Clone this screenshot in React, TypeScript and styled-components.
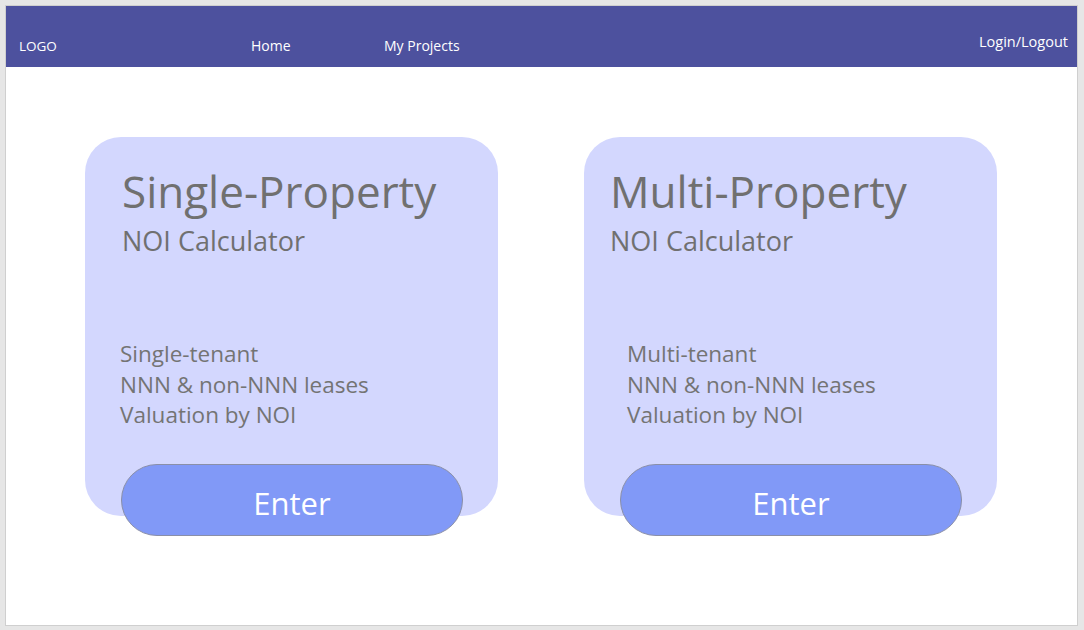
import React from 'react'
import styled, { createGlobalStyle } from 'styled-components'

const Global = createGlobalStyle`
  html, body {
    margin: 0;
    padding: 0;
    background: #e6e6e6;
    font-family: "Open Sans", "Noto Sans", sans-serif;
  }
`

const Frame = styled.div`
  box-sizing: border-box;
  margin: 5px 0 0 5px;
  width: 1073px;
  height: 621px;
  background: #ffffff;
  border: 1px solid #cfcfcf;
  display: flex;
  flex-direction: column;
`

const Header = styled.header`
  box-sizing: border-box;
  height: 61px;
  background: #4d519e;
  color: #ffffff;
  display: flex;
  align-items: flex-end;
  padding: 0 9px 12px 13px;
  font-size: 14px;
`

const Logo = styled.div`
  width: 232px;
  font-size: 13.5px;
`

const NavLink = styled.a<{ $w?: number }>`
  color: #ffffff;
  text-decoration: none;
  width: ${(p) => (p.$w ? `${p.$w}px` : 'auto')};
`

const Auth = styled.a`
  margin-left: auto;
  color: #ffffff;
  text-decoration: none;
  font-size: 14.5px;
  position: relative;
  top: -4px;
`

const Main = styled.main`
  display: flex;
  gap: 86px;
  padding: 70px 79px 0 79px;
`

const Card = styled.section`
  box-sizing: border-box;
  width: 413px;
  height: 379px;
  background: #d3d7fe;
  border-radius: 36px;
  display: flex;
  flex-direction: column;
  padding: 28px 35px 0 36px;
`

const Title = styled.h2<{ $indent: number }>`
  margin: 0 0 0 ${(p) => p.$indent}px;
  font-weight: 400;
  font-size: 44px;
  line-height: 52px;
  color: #707070;
`

const Subtitle = styled.div<{ $indent: number }>`
  margin: 6px 0 0 ${(p) => p.$indent}px;
  font-size: 27px;
  line-height: 36px;
  color: #707070;
`

const Features = styled.ul<{ $indent: number }>`
  list-style: none;
  margin: 80px 0 0 ${(p) => p.$indent}px;
  padding: 0;
  font-size: 22.5px;
  line-height: 30.5px;
  color: #747474;
`

const EnterButton = styled.button`
  box-sizing: border-box;
  margin-top: auto;
  margin-bottom: -20px;
  width: 342px;
  height: 72px;
  padding: 5px 0 0;
  border-radius: 36px;
  border: 1px solid #8a8fa8;
  background: #8199f7;
  color: #ffffff;
  font-family: inherit;
  font-size: 31px;
  cursor: pointer;
`

type CalcProps = {
  title: string
  tenant: string
  titleIndent: number
  listIndent: number
}

const CalcCard = ({ title, tenant, titleIndent, listIndent }: CalcProps) => (
  <Card>
    <Title $indent={titleIndent}>{title}</Title>
    <Subtitle $indent={titleIndent}>NOI Calculator</Subtitle>
    <Features $indent={listIndent}>
      <li>{tenant}</li>
      <li>NNN &amp; non-NNN leases</li>
      <li>Valuation by NOI</li>
    </Features>
    <EnterButton>Enter</EnterButton>
  </Card>
)

export default function App() {
  return (
    <>
      <Global />
      <Frame>
        <Header>
          <Logo>LOGO</Logo>
          <NavLink $w={133}>Home</NavLink>
          <NavLink>My Projects</NavLink>
          <Auth>Login/Logout</Auth>
        </Header>
        <Main>
          <CalcCard title="Single-Property" tenant="Single-tenant" titleIndent={1} listIndent={-1} />
          <CalcCard title="Multi-Property" tenant="Multi-tenant" titleIndent={-10} listIndent={7} />
        </Main>
      </Frame>
    </>
  )
}
